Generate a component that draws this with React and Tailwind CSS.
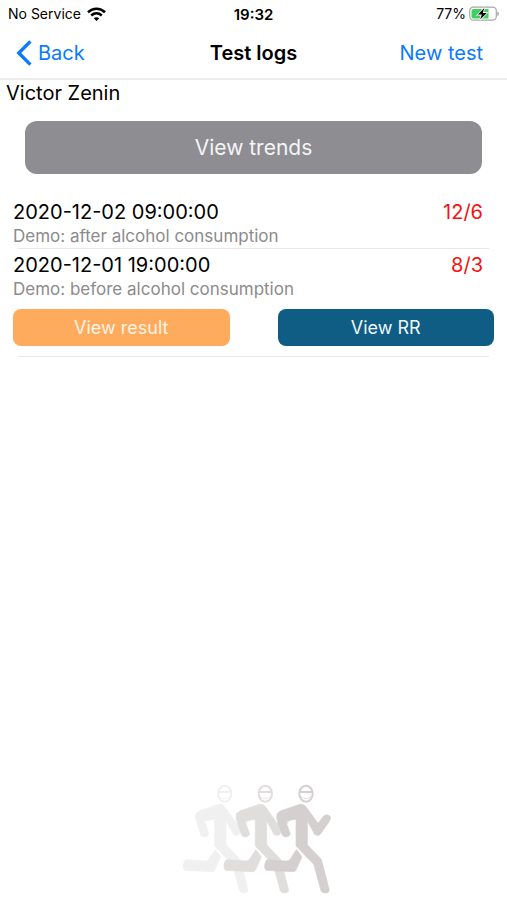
// src/App.jsx
import React, { useState } from "react";

const logs = [
  {
    id: 2,
    date: "2020-12-02 09:00:00",
    note: "Demo: after alcohol consumption",
    score: "12/6",
  },
  {
    id: 1,
    date: "2020-12-01 19:00:00",
    note: "Demo: before alcohol consumption",
    score: "8/3",
  },
];

function StatusBar() {
  return (
    <div className="grid grid-cols-3 items-center h-7 px-2 text-[14px] leading-none">
      <div className="flex items-center gap-1.5 whitespace-nowrap">
        <span>No Service</span>
        <svg width="19" height="14" viewBox="0 0 19 14" fill="none" stroke="#000" strokeWidth="2.6">
          <path d="M1 5.2C6 .6 13 .6 18 5.2" />
          <path d="M4.2 8.5C7.3 5.7 11.7 5.7 14.8 8.5" />
          <path d="M9.5 14L6.8 11.2C8.3 9.8 10.7 9.8 12.2 11.2Z" fill="#000" stroke="none" />
        </svg>
      </div>
      <span className="text-center text-[15px] font-semibold">19:32</span>
      <div className="flex items-center justify-end gap-[3px]">
        <span>77%</span>
        <svg width="30" height="16" viewBox="0 0 30 16">
          <rect x="0.7" y="1.2" width="26.6" height="13" rx="3.6" fill="#fff" stroke="#a8a8a8" strokeWidth="1.2" />
          <path d="M4.5 3H19.5V12.5H4.5Q2.5 12.5 2.5 10.5V5Q2.5 3 4.5 3Z" fill="#3fcf62" />
          <path d="M28.3 5.5Q30 6 30 7.7Q30 9.4 28.3 10Z" fill="#a8a8a8" />
          <path
            d="M15.3 2L8.8 8.6H12.8L11.2 13.6L17.8 6.9H13.8Z"
            fill="#000"
            stroke="#fff"
            strokeWidth="1.6"
            paintOrder="stroke"
          />
        </svg>
      </div>
    </div>
  );
}

function Navbar() {
  return (
    <header className="grid grid-cols-3 items-center h-[52px] px-4 border-b-2 border-[#ededed] text-[20px]">
      <button className="flex items-center gap-1.5 text-[#0a7aff]">
        <svg width="16" height="26" viewBox="0 0 16 26" fill="none" stroke="currentColor" strokeWidth="3.4">
          <path d="M14.4 1.4L2.8 13L14.4 24.6" />
        </svg>
        Back
      </button>
      <h1 className="text-center font-semibold whitespace-nowrap">Test logs</h1>
      <button className="justify-self-end mr-2 text-[#0a7aff] whitespace-nowrap">New test</button>
    </header>
  );
}

function Runner({ x, color }) {
  return (
    <g transform={`translate(${x} 0)`} fill={color} stroke={color} strokeLinejoin="round">
      {/* head with headband */}
      <ellipse cx="408" cy="71" rx="20" ry="24" fill="none" strokeWidth="6" />
      <path d="M389 66H427" strokeWidth="6" />
      <path d="M393 80Q408 92 423 80" fill="none" strokeWidth="2" />
      {/* arms, torso and front leg */}
      <path
        d="M322 130L333 122L390 103Q400 101 407 109L444 160L461 138Q472 130 480 139Q484 145 478 154L450 194Q442 199 434 193L412 152V224L454 268L478 360Q477 369 467 369Q455 369 453 362L431 283L378 229V148L347 153L361 192Q356 203 343 200L337 196L320 144Z"
        strokeWidth="2"
      />
      {/* back leg */}
      <path
        d="M380 238L396 261L377 302Q374 306 367 305L289 301Q283 298 284 286Q286 271 292 269L349 273Q357 273 361 267Z"
        strokeWidth="2"
      />
      <path d="M376 231L400 256" stroke="#fff" strokeWidth="4" fill="none" />
    </g>
  );
}

function RunnersLogo() {
  return (
    <svg width="154" height="114" viewBox="30 36 462 342" aria-hidden="true">
      <Runner x={-244} color="#f1f0f0" />
      <Runner x={-122} color="#e0dddd" />
      <Runner x={0} color="#d4d0d0" />
    </svg>
  );
}

export default function App() {
  const [openId, setOpenId] = useState(1);

  return (
    <div className="min-h-screen flex flex-col bg-white text-black font-['Inter','Liberation_Sans',sans-serif]">
      <StatusBar />
      <Navbar />

      <main className="flex flex-col">
        <p className="px-1.5 text-[20px] leading-[26px]">Victor Zenin</p>
        <button className="mt-[15px] mx-[25px] h-[53px] rounded-xl bg-[#8e8d92] text-[#f4f4f6] text-[21px]">
          View trends
        </button>

        <ul className="mt-[22px]">
          {logs.map((log) => (
            <li key={log.id}>
              <button
                onClick={() => setOpenId(openId === log.id ? null : log.id)}
                className="block w-full pt-1 pl-[13px] pr-6 text-left"
              >
                <span className="flex justify-between text-[20px] leading-[24px]">
                  <span>{log.date}</span>
                  <span className="text-[#f5120f]">{log.score}</span>
                </span>
                <span className="block text-[17px] leading-[24px] text-[#8b8b8b]">{log.note}</span>
              </button>
              {openId === log.id && (
                <div className="grid grid-cols-2 gap-12 pt-2 pb-2.5 px-[13px] text-[18px]">
                  <button className="h-[37px] rounded-lg bg-[#ffab5e] text-[#fff3e4]">View result</button>
                  <button className="h-[37px] rounded-lg bg-[#0f5d84] text-[#eef6fa]">View RR</button>
                </div>
              )}
              <div className="mx-[18px] h-px bg-[#e8e8e8]" />
            </li>
          ))}
        </ul>
      </main>

      <footer className="mt-auto flex justify-center pt-8 pb-1 pl-1.5">
        <RunnersLogo />
      </footer>
    </div>
  );
}
